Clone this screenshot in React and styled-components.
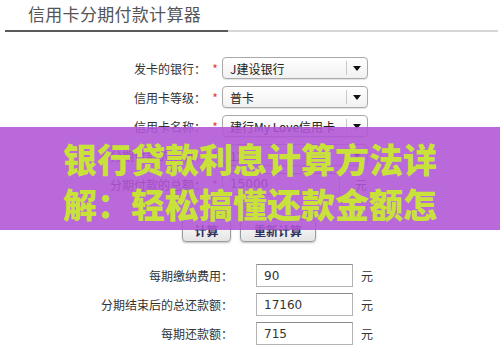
import { Fragment } from "react";
import styled, { createGlobalStyle } from "styled-components";

const Global = createGlobalStyle`
	html, body {
		margin: 0;
		padding: 0;
		background: #fff;
	}
	body {
		font-family: "Noto Sans CJK SC", "Noto Sans", sans-serif;
	}
`;

const Page = styled.div`
	position: relative;
	width: 500px;
	height: 358px;
	overflow: hidden;
	background: #fff;
`;
const Header = styled.div`
	display: flex;
	flex-direction: column;
	padding-top: 4px;
`;
const Title = styled.h1`
	margin: 0 0 0 28px;
	height: 26px;
	font-size: 17px;
	line-height: 20px;
	font-weight: 400;
	color: #555;
	letter-spacing: 0.3px;
`;
const Rule = styled.div`
	display: flex;
	margin: 0 2px 0 5px;
`;
const Line = styled.div`
	height: 2px;
	background: ${(p) => (p.$dark ? "#5a5a5a" : "#d6d6d6")};
	width: ${(p) => (p.$dark ? "223px" : "auto")};
	flex: ${(p) => (p.$dark ? "none" : "1")};
`;
const Form = styled.div`
	display: grid;
	grid-template-columns: 206px 16px auto;
	grid-auto-rows: 22px;
	row-gap: 7px;
	margin-top: 25px;
	align-items: center;
`;
const Label = styled.div`
	text-align: right;
	font-size: 12px;
	color: #333;
	white-space: nowrap;
`;
const Star = styled.div`
	color: #e23b3b;
	font-size: 12px;
	text-align: center;
	padding-left: 2px;
`;
const Control = styled.div`
	display: flex;
	align-items: center;
	gap: 15px;
`;
const Select = styled.div`
	display: flex;
	align-items: center;
	width: 144px;
	height: 20px;
	border: 1px solid #a9a9a9;
	border-radius: 4px;
	background: linear-gradient(#fff, #f1f1f1);
	box-shadow: 0 1px 1px rgba(0, 0, 0, 0.12);
	font-size: 12px;
	color: #222;
`;
const SelectText = styled.span`
	flex: 1;
	padding-left: 7px;
	white-space: nowrap;
`;
const Arrow = styled.span`
	width: 20px;
	height: 14px;
	border-left: 1px solid #c8c8c8;
	display: flex;
	align-items: center;
	justify-content: center;
	&::after {
		content: "";
		border-left: 4px solid transparent;
		border-right: 4px solid transparent;
		border-top: 5px solid #111;
	}
`;
const Input = styled.div`
	box-sizing: border-box;
	width: ${(p) => p.$width}px;
	height: ${(p) => p.$height || 22}px;
	border: 1px solid #b3b3b3;
	border-top-color: #8c8c8c;
	padding-left: 7px;
	display: flex;
	align-items: center;
	font-family: "DejaVu Sans", "Noto Sans", sans-serif;
	font-size: 12px;
	color: #333;
`;
const Unit = styled.span`
	font-size: 12px;
	color: #333;
`;
const Buttons = styled.div`
	display: flex;
	gap: 9px;
	margin: 24px 0 0 182px;
`;
const Button = styled.button`
	height: 23px;
	width: ${(p) => p.$width}px;
	border: 1px solid #9a9a9a;
	border-radius: 4px;
	background: linear-gradient(#ffffff, #e4e4e4);
	box-shadow: 0 1px 2px rgba(0, 0, 0, 0.25);
	font-family: "Noto Sans CJK SC", sans-serif;
	font-size: 12px;
	font-weight: 700;
	color: #2b2d5c;
	padding: 0;
`;
const Results = styled.div`
	display: grid;
	grid-template-columns: 233px 97px auto;
	grid-auto-rows: 23px;
	row-gap: 6px;
	margin-top: 22px;
	align-items: center;
`;
const ResultInput = styled(Input)`
	margin-left: 23px;
`;
const ResultUnit = styled(Unit)`
	margin-left: 31px;
`;
const Banner = styled.div`
	position: absolute;
	top: 127px;
	left: 0;
	right: 0;
	height: 103px;
	box-sizing: border-box;
	padding-top: 9px;
	background: rgba(175, 84, 212, 0.88);
	color: #c9e23a;
	font-family: "Noto Sans CJK SC", sans-serif;
	font-weight: 900;
	font-size: 34px;
	line-height: 45px;
	text-align: center;
`;

const rows = [
	{ label: "发卡的银行：", value: "J建设银行" },
	{ label: "信用卡等级：", value: "普卡" },
	{ label: "信用卡名称：", value: "建行My Love信用卡" },
	{ label: "分期付款的期数：", value: "12" },
];

const results = [
	{ label: "每期缴纳费用：", value: "90" },
	{ label: "分期结束后的总还款额：", value: "17160" },
	{ label: "每期还款额：", value: "715" },
];

const App = () => {
	return (
		<Page>
			<Global />
			<Header>
				<Title>信用卡分期付款计算器</Title>
				<Rule>
					<Line $dark />
					<Line />
				</Rule>
			</Header>
			<Form>
				{rows.map((r) => (
					<Fragment key={r.label}>
						<Label>{r.label}</Label>
						<Star>*</Star>
						<Control>
							<Select>
								<SelectText>{r.value}</SelectText>
								<Arrow />
							</Select>
						</Control>
					</Fragment>
				))}
				<Label>分期付款的总额：</Label>
				<Star>*</Star>
				<Control>
					<Input $width={118}>15000</Input>
					<Unit>元</Unit>
				</Control>
			</Form>
			<Buttons>
				<Button $width={49}>计算</Button>
				<Button $width={76}>重新计算</Button>
			</Buttons>
			<Results>
				{results.map((r) => (
					<Fragment key={r.label}>
						<Label>{r.label}</Label>
						<ResultInput $width={97} $height={23}>
							{r.value}
						</ResultInput>
						<ResultUnit>元</ResultUnit>
					</Fragment>
				))}
			</Results>
			<Banner>
				银行贷款利息计算方法详
				<br />
				解：轻松搞懂还款金额怎
			</Banner>
		</Page>
	);
};
export default App;
